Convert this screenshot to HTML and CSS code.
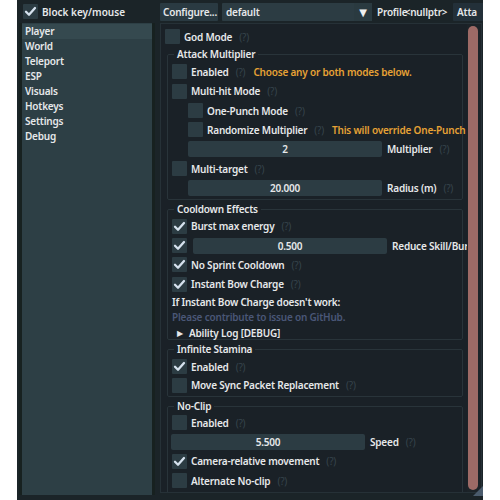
FILE: index.html
```html
<!DOCTYPE html>
<html>
<head>
<meta charset="utf-8">
<link rel="stylesheet" href="styles.css">
</head>
<body>
<div class="app">
  <div class="topbar">
    <span class="cb on top-cb"><svg viewBox="0 0 15 15"><polyline points="3,7.8 6,10.8 12,4"/></svg></span>
    <span class="lbl top-lbl">Block key/mouse</span>
    <span class="btn configure">Configure...</span>
    <span class="combo"><span class="combo-text">default</span><span class="combo-arrow">&#9660;</span></span>
    <span class="profile">Profil<span class="ovl">e</span><span class="lt">&lt;</span>nullptr&gt;</span>
    <span class="btn atta">Atta</span>
  </div>
  <div class="main">
    <div class="sidebar">
      <div class="item sel">Player</div>
      <div class="item">World</div>
      <div class="item">Teleport</div>
      <div class="item">ESP</div>
      <div class="item">Visuals</div>
      <div class="item">Hotkeys</div>
      <div class="item">Settings</div>
      <div class="item">Debug</div>
    </div>
    <div class="panel">
      <div class="scroll">
        <div class="row"><span class="cb"></span><span class="lbl">God Mode</span><span class="help">(?)</span></div>

        <fieldset class="group g-attack">
          <legend>Attack Multiplier</legend>
          <div class="rows">
            <div class="row"><span class="cb"></span><span class="lbl">Enabled</span><span class="help">(?)</span><span class="warn">Choose any or both modes below.</span></div>
            <div class="row"><span class="cb"></span><span class="lbl">Multi-hit Mode</span><span class="help">(?)</span></div>
            <div class="row ind"><span class="cb"></span><span class="lbl">One-Punch Mode</span><span class="help">(?)</span></div>
            <div class="row ind"><span class="cb"></span><span class="lbl">Randomize Multiplier</span><span class="help">(?)</span><span class="warn">This will override One-Punch</span></div>
            <div class="row ind"><span class="slider">2</span><span class="lbl">Multiplier</span><span class="help">(?)</span></div>
            <div class="row"><span class="cb"></span><span class="lbl">Multi-target</span><span class="help">(?)</span></div>
            <div class="row ind"><span class="slider">20.000</span><span class="lbl">Radius (m)</span><span class="help">(?)</span></div>
          </div>
        </fieldset>

        <fieldset class="group g-cool">
          <legend>Cooldown Effects</legend>
          <div class="rows">
            <div class="row"><span class="cb on"><svg viewBox="0 0 15 15"><polyline points="3,7.8 6,10.8 12,4"/></svg></span><span class="lbl">Burst max energy</span><span class="help">(?)</span></div>
            <div class="row"><span class="cb on"><svg viewBox="0 0 15 15"><polyline points="3,7.8 6,10.8 12,4"/></svg></span><span class="slider s-reduce">0.500</span><span class="lbl">Reduce Skill/Burst Cooldown</span></div>
            <div class="row"><span class="cb on"><svg viewBox="0 0 15 15"><polyline points="3,7.8 6,10.8 12,4"/></svg></span><span class="lbl">No Sprint Cooldown</span><span class="help">(?)</span></div>
            <div class="row"><span class="cb on"><svg viewBox="0 0 15 15"><polyline points="3,7.8 6,10.8 12,4"/></svg></span><span class="lbl">Instant Bow Charge</span><span class="help">(?)</span></div>
            <div class="notes">
              <div class="note">If Instant Bow Charge doesn't work:</div>
              <div class="note link">Please contribute to issue on GitHub.</div>
              <div class="note tree"><span class="tri">&#9654;</span>Ability Log [DEBUG]</div>
            </div>
          </div>
        </fieldset>

        <fieldset class="group g-stam">
          <legend>Infinite Stamina</legend>
          <div class="rows">
            <div class="row"><span class="cb on"><svg viewBox="0 0 15 15"><polyline points="3,7.8 6,10.8 12,4"/></svg></span><span class="lbl">Enabled</span><span class="help">(?)</span></div>
            <div class="row"><span class="cb"></span><span class="lbl">Move Sync Packet Replacement</span><span class="help">(?)</span></div>
          </div>
        </fieldset>

        <fieldset class="group g-clip">
          <legend>No-Clip</legend>
          <div class="rows">
            <div class="row"><span class="cb"></span><span class="lbl">Enabled</span><span class="help">(?)</span></div>
            <div class="row"><span class="slider s-speed">5.500</span><span class="lbl">Speed</span><span class="help">(?)</span></div>
            <div class="row"><span class="cb on"><svg viewBox="0 0 15 15"><polyline points="3,7.8 6,10.8 12,4"/></svg></span><span class="lbl">Camera-relative movement</span><span class="help">(?)</span></div>
            <div class="row"><span class="cb"></span><span class="lbl">Alternate No-clip</span><span class="help">(?)</span></div>
          </div>
        </fieldset>
      </div>
      <div class="scrollbar"><div class="thumb"></div></div>
      <div class="grip"></div>
    </div>
  </div>
</div>
</body>
</html>
```

FILE: styles.css
```css
html, body {
  margin: 0;
  padding: 0;
  background: #ffffff;
}
body {
  font-family: "Noto Sans", "DejaVu Sans", sans-serif;
  font-size: 10px;
  font-weight: 600;
  letter-spacing: -0.2px;
  color: #e6e8ea;
}
.app {
  margin-left: 17px;
  width: 466px;
  height: 500px;
  background: #1b2428;
  display: flex;
  flex-direction: column;
  overflow: hidden;
}
.topbar {
  height: 23px;
  display: flex;
  align-items: center;
  white-space: nowrap;
  flex: none;
}
.topbar > * {
  flex: none;
}
.top-cb {
  margin-left: 6px;
}
.topbar .top-lbl {
  margin-left: 4px;
  width: 114px;
  letter-spacing: 0;
}
.btn {
  height: 18px;
  line-height: 18px;
  background: #2a3a42;
  border-radius: 1px;
  box-sizing: border-box;
}
.configure {
  margin-left: 4px;
  width: 58px;
  padding-left: 3px;
}
.combo {
  margin-left: 4px;
  width: 150px;
  height: 18px;
  line-height: 18px;
  background: #2c3c43;
  display: flex;
  border-radius: 1px;
}
.combo-text {
  flex: 1;
  padding-left: 4px;
}
.combo-arrow {
  width: 18px;
  text-align: center;
  font-size: 10px;
  background: #2a3a40;
  color: #f0f0f0;
}
.profile {
  margin-left: 5px;
  width: 71px;
}
.ovl {
  display: inline-block;
  width: 3px;
}
.lt {
  display: inline-block;
}
.atta {
  margin-left: 5px;
  background: #233039;
  padding-left: 4px;
  width: 40px;
}
.main {
  flex: 1;
  display: flex;
  padding: 0 0 5px 5px;
  gap: 8px;
  min-height: 0;
}
.sidebar {
  width: 130px;
  background: #2d3f45;
  padding-top: 1px;
  box-shadow: -3px 0 0 #172120, 3px 0 0 #172120;
}
.item {
  height: 15px;
  line-height: 15px;
  padding-left: 3px;
}
.item.sel {
  background: #35494f;
}
.panel {
  width: 322px;
  background: #1a2127;
  border: 1px solid #263137;
  box-sizing: border-box;
  display: flex;
  position: relative;
  margin-bottom: -2px;
  height: 470px;
}
.scroll {
  flex: 1;
  overflow: hidden;
  padding: 5px 0 0 4px;
  white-space: nowrap;
  min-width: 0;
}
.scrollbar {
  width: 14px;
  padding: 2px 3px 2px 1px;
  box-sizing: border-box;
  flex: none;
  background: #1c2328;
}
.thumb {
  width: 10px;
  height: 464px;
  background: #9d6a66;
  border-radius: 5px;
}
.grip {
  position: absolute;
  right: -2px;
  bottom: -4px;
  width: 0;
  height: 0;
  border-left: 10px solid transparent;
  border-bottom: 10px solid #4a5b6c;
}
.row {
  display: flex;
  align-items: center;
  height: 15.33px;
}
.rows {
  display: flex;
  flex-direction: column;
  gap: 4px;
}
.row.ind {
  padding-left: 16px;
}
.cb {
  width: 15px;
  height: 15px;
  background: #2c3c43;
  border-radius: 1px;
  flex: none;
  display: flex;
  align-items: center;
  justify-content: center;
}
.cb svg {
  width: 15px;
  height: 15px;
}
.cb polyline {
  fill: none;
  stroke: #d6e2ee;
  stroke-width: 2.3;
  stroke-linecap: round;
  stroke-linejoin: round;
}
.lbl {
  margin-left: 4px;
}
.help {
  margin-left: 7px;
  color: #36444c;
  font-weight: 400;
}
.warn {
  margin-left: 8px;
  color: #e6a235;
}
.slider {
  width: 194px;
  height: 16px;
  line-height: 16px;
  background: #2c3c43;
  border-radius: 2px;
  text-align: center;
  flex: none;
}
.slider + .lbl {
  margin-left: 5px;
}
.s-reduce {
  margin-left: 6px;
}
.s-speed {
  margin-left: -1px;
}
.group {
  margin: 3px 0 0 2px;
  width: 296px;
  box-sizing: border-box;
  border: 1px solid #29343a;
  border-radius: 2px;
  padding: 2px 4px 3px 4px;
  min-width: 0;
}
.group legend {
  padding: 0 3px;
  margin-left: 2px;
  height: 15px;
  line-height: 15px;
}
.g-cool {
  margin-top: 2px;
  padding-bottom: 0;
}
.g-stam {
  margin-top: 2px;
}
.g-stam .rows {
  gap: 3px;
}
.g-clip {
  margin-top: 2px;
  padding-top: 1px;
  padding-bottom: 6px;
}
.notes {
  margin-top: -1px;
}
.note {
  height: 14.8px;
  line-height: 15px;
}
.note.link {
  color: #4a5777;
}
.note.tree {
  padding-left: 5px;
}
.tri {
  font-size: 8px;
  margin-right: 6px;
  vertical-align: 1px;
}
```
